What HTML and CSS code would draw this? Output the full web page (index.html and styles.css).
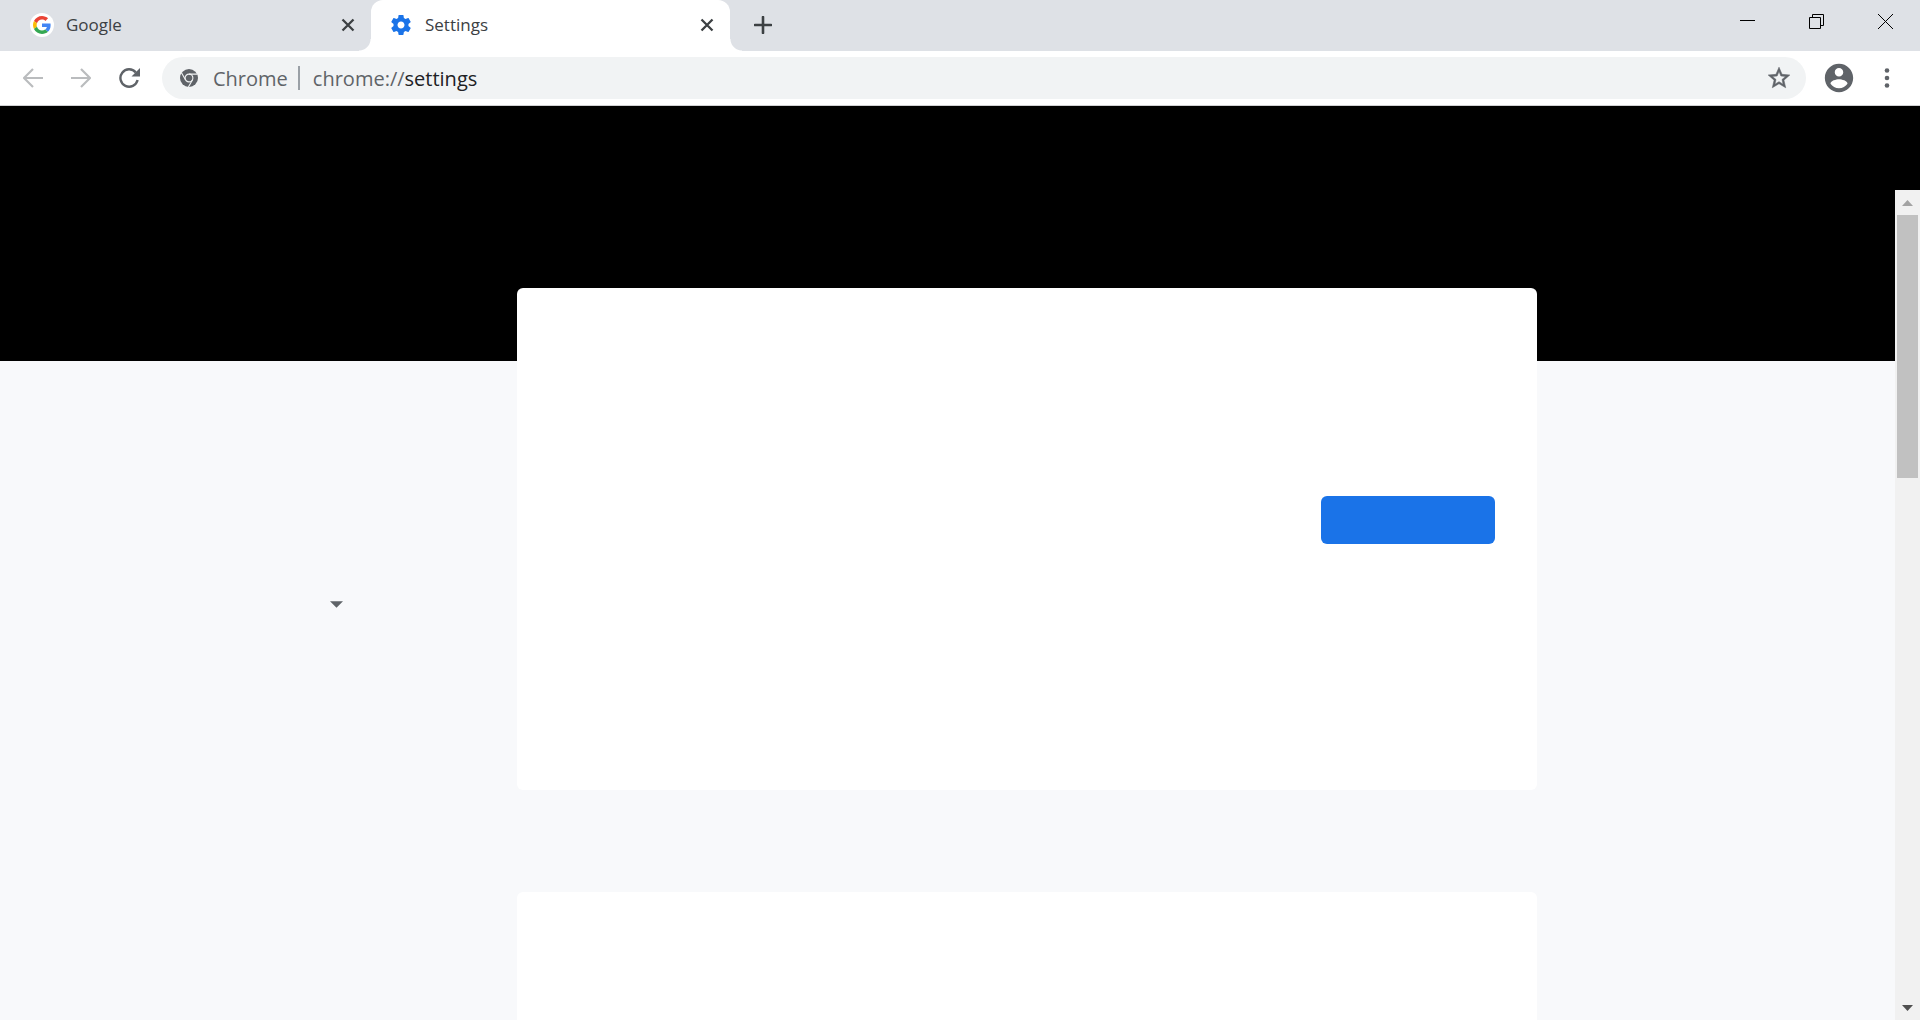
FILE: index.html
```html
<!DOCTYPE html>
<html lang="en">
<head>
    <meta charset="UTF-8">
    <meta name="viewport" content="width=device-width, initial-scale=1.0">
    <title>Settings</title>
    <link rel="stylesheet" href="styles.css">
</head>
<body>
    <div class="tab-strip">
        <div class="tab">
            <span class="favicon">
                <svg width="18" height="18" viewBox="0 0 48 48">
                    <path fill="#EA4335" d="M24 9.5c3.54 0 6.71 1.22 9.21 3.6l6.85-6.85C35.9 2.38 30.47 0 24 0 14.62 0 6.51 5.38 2.56 13.22l7.98 6.19C12.43 13.72 17.74 9.5 24 9.5z"/>
                    <path fill="#4285F4" d="M46.98 24.55c0-1.57-.15-3.09-.38-4.55H24v9.02h12.94c-.58 2.96-2.26 5.48-4.78 7.18l7.73 6c4.51-4.18 7.09-10.36 7.09-17.65z"/>
                    <path fill="#FBBC05" d="M10.53 28.59c-.48-1.45-.76-2.99-.76-4.59s.27-3.14.76-4.59l-7.98-6.19C.92 16.46 0 20.12 0 24c0 3.88.92 7.54 2.56 10.78l7.97-6.19z"/>
                    <path fill="#34A853" d="M24 48c6.48 0 11.93-2.13 15.89-5.81l-7.73-6c-2.15 1.45-4.92 2.3-8.16 2.3-6.26 0-11.57-4.22-13.47-9.91l-7.98 6.19C6.51 42.62 14.62 48 24 48z"/>
                </svg>
            </span>
            <span class="tab-title">Google</span>
            <button class="tab-close" aria-label="Close Google">
                <svg width="14" height="14" viewBox="0 0 14 14"><path d="M1.5 1.5l11 11M12.5 1.5l-11 11"/></svg>
            </button>
        </div>
        <div class="tab active">
            <span class="favicon gear">
                <svg width="24" height="24" viewBox="0 0 24 24">
                    <path fill="#1a73e8" d="M19.43 12.98c.04-.32.07-.64.07-.98s-.03-.66-.07-.98l2.11-1.65c.19-.15.24-.42.12-.64l-2-3.46c-.12-.22-.39-.3-.61-.22l-2.49 1c-.52-.4-1.08-.73-1.69-.98l-.38-2.65C14.46 2.18 14.25 2 14 2h-4c-.25 0-.46.18-.49.42l-.38 2.65c-.61.25-1.17.59-1.69.98l-2.49-1c-.23-.09-.49 0-.61.22l-2 3.46c-.13.22-.07.49.12.64l2.11 1.65c-.04.32-.07.65-.07.98s.03.66.07.98l-2.11 1.65c-.19.15-.24.42-.12.64l2 3.46c.12.22.39.3.61.22l2.49-1c.52.4 1.08.73 1.69.98l.38 2.65c.03.24.24.42.49.42h4c.25 0 .46-.18.49-.42l.38-2.65c.61-.25 1.17-.59 1.69-.98l2.49 1c.23.09.49 0 .61-.22l2-3.46c.12-.22.07-.49-.12-.64l-2.11-1.65zM12 15.5c-1.93 0-3.5-1.57-3.5-3.5s1.57-3.5 3.5-3.5 3.5 1.57 3.5 3.5-1.57 3.5-3.5 3.5z"/>
                </svg>
            </span>
            <span class="tab-title">Settings</span>
            <button class="tab-close" aria-label="Close Settings">
                <svg width="14" height="14" viewBox="0 0 14 14"><path d="M1.5 1.5l11 11M12.5 1.5l-11 11"/></svg>
            </button>
        </div>
        <button class="new-tab" aria-label="New tab">
            <svg width="18" height="18" viewBox="0 0 18 18"><path d="M9 1v16M1 9h16"/></svg>
        </button>
        <div class="window-controls">
            <button aria-label="Minimize">
                <svg width="15" height="15" viewBox="0 0 15 15"><path d="M0 6.5h15"/></svg>
            </button>
            <button aria-label="Restore">
                <svg width="15" height="15" viewBox="0 0 15 15"><path d="M.5 3.5h11v11H.5zM3.5 3.5v-3h11v11h-3"/></svg>
            </button>
            <button aria-label="Close">
                <svg width="15" height="15" viewBox="0 0 15 15"><path d="M0 0l15 15M15 0L0 15"/></svg>
            </button>
        </div>
    </div>

    <div class="toolbar">
        <div class="nav">
            <button class="disabled" aria-label="Back">
                <svg width="20" height="20" viewBox="0 0 20 20"><path d="M10 1L1 10l9 9M1 10h19"/></svg>
            </button>
            <button class="disabled" aria-label="Forward">
                <svg width="20" height="20" viewBox="0 0 20 20"><path d="M10 1l9 9-9 9M19 10H0"/></svg>
            </button>
            <button aria-label="Reload">
                <svg width="22" height="20" viewBox="0 0 22 20">
                    <path d="M18.6 12A8.7 8.7 0 1 1 16.8 4.4"/>
                    <path class="solid" d="M21 0v8.5h-8.5z"/>
                </svg>
            </button>
        </div>
        <div class="omnibox">
            <svg class="chrome-icon" width="18" height="18" viewBox="0 0 18 18">
                <circle cx="9" cy="9" r="9" fill="#5f6368"/>
                <g fill="none" stroke="#f1f3f4" stroke-width="1.1">
                    <circle cx="9" cy="9" r="3.9"/>
                    <path d="M9 5.1h8.4M5.6 11L1.5 3.8M12.4 11l-4 7"/>
                </g>
            </svg>
            <span class="site">Chrome</span>
            <span class="divider"></span>
            <label for="url">chrome://</label>
            <input type="text" id="url" value="settings">
            <button class="star" aria-label="Bookmark this tab">
                <svg width="26" height="26" viewBox="0 0 24 24">
                    <path fill="#5f6368" stroke="#5f6368" stroke-width=".5" d="M22 9.24l-7.19-.62L12 2 9.19 8.63 2 9.24l5.46 4.73L5.82 21 12 17.27 18.18 21l-1.63-7.03L22 9.24zM12 15.4l-3.76 2.27 1-4.28-3.32-2.88 4.38-.38L12 6.1l1.71 4.04 4.38.38-3.32 2.88 1 4.28L12 15.4z"/>
                </svg>
            </button>
        </div>
        <button class="profile" aria-label="Profile">
            <svg width="34" height="34" viewBox="0 0 24 24">
                <path fill="#5f6368" d="M12 2C6.48 2 2 6.48 2 12s4.48 10 10 10 10-4.48 10-10S17.52 2 12 2zm0 3c1.66 0 3 1.34 3 3s-1.34 3-3 3-3-1.34-3-3 1.34-3 3-3zm0 14.2c-2.5 0-4.71-1.28-6-3.22.03-1.99 4-3.08 6-3.08 1.99 0 5.97 1.09 6 3.08-1.29 1.94-3.5 3.22-6 3.22z"/>
            </svg>
        </button>
        <button class="menu" aria-label="Menu">
            <svg width="6" height="20" viewBox="0 0 6 20" fill="#5f6368">
                <circle cx="3" cy="2.5" r="2.3"/>
                <circle cx="3" cy="10" r="2.3"/>
                <circle cx="3" cy="17.5" r="2.3"/>
            </svg>
        </button>
    </div>

    <div class="page-header"></div>
    <div class="page">
        <div class="scroller">
            <div class="band"></div>
            <div class="columns">
                <div class="sidebar">
                    <button class="expand" aria-label="Advanced">
                        <svg width="13" height="7" viewBox="0 0 14 7"><path fill="#5f6368" d="M0 0h14L7 7z"/></svg>
                    </button>
                </div>
                <div class="cards">
                    <div class="card">
                        <button class="primary" aria-label="Turn on sync"></button>
                    </div>
                    <div class="card"></div>
                </div>
            </div>
        </div>
        <div class="scrollbar">
            <button aria-label="Scroll up">
                <svg width="11" height="6" viewBox="0 0 11 6"><path fill="#a3a3a3" d="M5.5 0L11 6H0z"/></svg>
            </button>
            <div class="track">
                <div class="thumb"></div>
            </div>
            <button aria-label="Scroll down">
                <svg width="11" height="6" viewBox="0 0 11 6"><path fill="#505050" d="M0 0h11L5.5 6z"/></svg>
            </button>
        </div>
    </div>
</body>
</html>
```

FILE: styles.css
```css
* {
    box-sizing: border-box;
}

body {
    display: flex;
    flex-direction: column;
    height: 100vh;
    margin: 0;
    overflow: hidden;
    background-color: #f8f9fb;
    font-family: "Segoe UI", "Open Sans", "Noto Sans", sans-serif;
}

button {
    display: flex;
    align-items: center;
    justify-content: center;
    padding: 0;
    border: none;
    background: none;
}

svg {
    display: block;
    flex: none;
}

/* tabs */
.tab-strip {
    display: flex;
    flex: none;
    height: 51px;
    background-color: #dee1e6;
}

.tab {
    display: flex;
    align-items: center;
    width: 371px;
    padding: 0 16px 2px 30px;
    color: #3c4043;
}

.tab.active {
    position: relative;
    width: 359px;
    padding-left: 18px;
    background-color: white;
    border-radius: 12px 12px 0 0;
}

/* curved feet of the active tab */
.tab.active::before,
.tab.active::after {
    content: "";
    position: absolute;
    bottom: 0;
    width: 12px;
    height: 12px;
}

.tab.active::before {
    right: 100%;
    background: radial-gradient(circle at 0 0, transparent 11px, white 12px);
}

.tab.active::after {
    left: 100%;
    background: radial-gradient(circle at 100% 0, transparent 11px, white 12px);
}

.favicon {
    display: flex;
    align-items: center;
    justify-content: center;
    width: 24px;
    height: 24px;
    margin-right: 12px;
    background-color: white;
    border-radius: 50%;
}

.tab-title {
    flex: 1;
    font-size: 17px;
}

.tab-close {
    width: 14px;
    height: 14px;
}

.tab-close path {
    stroke: #3c4043;
    stroke-width: 2.3;
}

.new-tab {
    width: 42px;
    margin-left: 12px;
    padding-bottom: 1px;
}

.new-tab path {
    stroke: #3c4043;
    stroke-width: 2.6;
    stroke-linecap: round;
}

.window-controls {
    display: flex;
    height: 43px;
    margin-left: auto;
}

.window-controls button {
    width: 69px;
}

.window-controls path {
    fill: none;
    stroke: black;
}

/* toolbar */
.toolbar {
    display: flex;
    flex: none;
    align-items: center;
    height: 55px;
    background-color: white;
    border-bottom: 1px solid #d0d1d3;
}

.nav {
    display: flex;
    gap: 28px;
    padding: 0 21px 0 23px;
}

.nav path {
    fill: none;
    stroke: #5f6368;
    stroke-width: 2.4;
}

.nav .disabled path {
    stroke: #babcbe;
    stroke-width: 2.2;
}

.nav .solid {
    fill: #5f6368;
    stroke: none;
}

.omnibox {
    display: flex;
    flex: 1;
    align-items: center;
    height: 42px;
    padding: 0 14px 0 18px;
    background-color: #f1f3f4;
    border-radius: 21px;
    color: #5f6368;
    font-size: 20px;
}

.site {
    margin-left: 15px;
}

.divider {
    width: 2px;
    height: 24px;
    margin: 0 13px 0 10px;
    background-color: #9aa0a6;
}

.omnibox input {
    flex: 1;
    min-width: 0;
    padding: 0;
    border: none;
    outline: none;
    background: none;
    color: #202124;
    font: inherit;
}

.profile {
    margin-left: 16px;
}

.menu {
    width: 28px;
    margin: 0 19px 0 17px;
}

/* settings page */
.page-header {
    flex: none;
    height: 84px;
    background-color: black;
}

.page {
    display: flex;
    flex: 1;
    min-height: 0;
}

.scroller {
    flex: 1;
    overflow: hidden;
}

.band {
    height: 171px;
    background-color: black;
}

.columns {
    display: grid;
    grid-template-columns: 13fr minmax(0, 1020px) 9fr;
}

.sidebar {
    padding: 240px 174px 0 0;
}

.expand {
    margin-left: auto;
}

.cards {
    display: flex;
    flex-direction: column;
    gap: 102px;
    margin-top: -73px;
}

.card {
    display: flex;
    justify-content: flex-end;
    min-height: 502px;
    padding: 208px 42px 0 0;
    background-color: white;
    border-radius: 6px;
}

.primary {
    width: 174px;
    height: 48px;
    background-color: #1a73e8;
    border-radius: 6px;
}

.scrollbar {
    display: flex;
    flex-direction: column;
    width: 25px;
    background-color: #f1f1f1;
}

.scrollbar button {
    height: 25px;
}

.track {
    flex: 1;
    padding: 0 2px;
}

/* share of the page that is in view */
.thumb {
    height: 33.7%;
    background-color: #c1c1c1;
}
```
